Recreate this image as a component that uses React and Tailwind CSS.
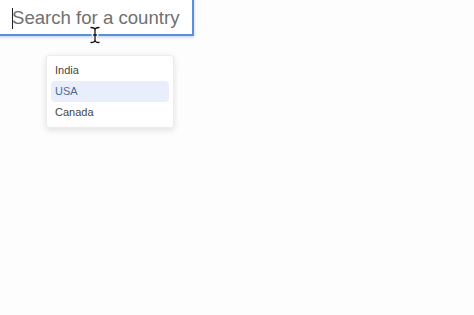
const COUNTRIES = ['India', 'USA', 'Canada']

function IBeam() {
  return (
    <svg className="absolute left-[89px] top-[26px]" width="12" height="18" viewBox="0 0 12 18">
      <path d="M2 1.5 Q6 1.5 6 4 Q6 1.5 10 1.5 M6 4 V14 Q6 16.5 2 16.5 M6 14 Q6 16.5 10 16.5 M4 9 H8" fill="none" stroke="#fff" strokeWidth="3" strokeLinecap="round" />
      <path d="M2 1.5 Q6 1.5 6 4 Q6 1.5 10 1.5 M6 4 V14 Q6 16.5 2 16.5 M6 14 Q6 16.5 10 16.5 M4.5 9 H7.5" fill="none" stroke="#111" strokeWidth="1.3" strokeLinecap="round" />
    </svg>
  )
}

export default function App() {
  return (
    <div className="relative w-[474px] h-[315px] overflow-hidden bg-[#fdfdfd] font-['Liberation_Sans',Arial,sans-serif]">
      <div className="-mt-[4px] -ml-[4px] w-[198px] h-[40px] border-2 border-[#5b8fdc] bg-white shadow-[0_1px_3px_rgba(60,110,200,0.35)] flex items-center pl-[14px] pt-[5px]">
        <span className="w-px h-[21px] bg-[#222] -mr-px" />
        <span className="text-[18.6px] text-[#707070] leading-none">Search for a country</span>
      </div>
      <div className="ml-[46px] mt-[19px] w-[128px] bg-white rounded-[3px] border border-[#ececec] shadow-[0_2px_6px_rgba(0,0,0,0.12)] p-1">
        {COUNTRIES.map((c) => (
          <div
            key={c}
            className={`h-[21px] flex items-center pl-[4px] text-[11px] rounded-sm ${c === 'USA' ? 'bg-[#e8eefb] text-[#4f6a96]' : 'text-[#444]'}`}
          >
            {c}
          </div>
        ))}
      </div>
      <IBeam />
    </div>
  )
}
